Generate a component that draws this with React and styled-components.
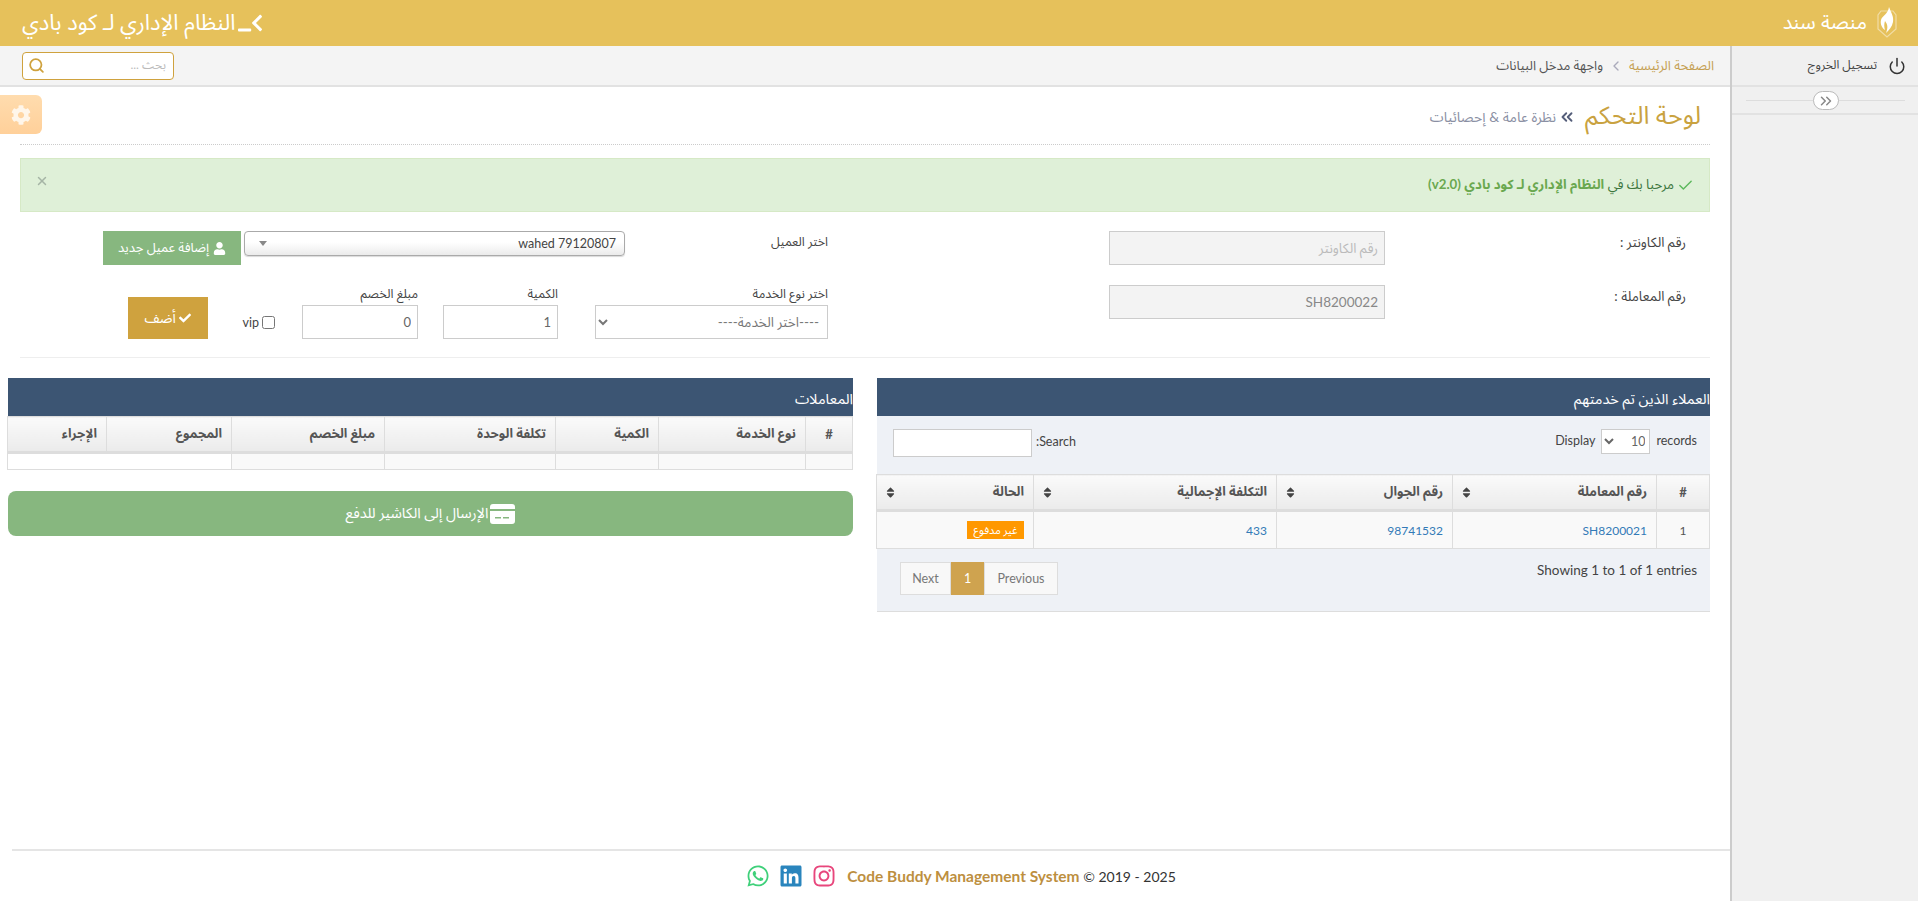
import React from "react";
import styled, { createGlobalStyle } from "styled-components";
import { Power, Check, ChevronsLeft, ChevronsRight, ChevronLeft, Search, X } from "lucide-react";
import { FaCog, FaUser, FaWhatsapp, FaLinkedin, FaInstagram, FaTerminal, FaSort, FaCheck } from "react-icons/fa";

const fontStack = `Lato, "Noto Sans Arabic", "DejaVu Sans", sans-serif`;

const GlobalStyle = createGlobalStyle`
  html, body { margin: 0; padding: 0; height: 100%; background: #fff; overflow: hidden; }
  body { font-family: ${fontStack}; font-size: 12.5px; color: #333; }
  * { box-sizing: border-box; }
`;

const Shell = styled.div`
  display: flex;
  flex-direction: column;
  height: 901px;
`;

const TopBar = styled.header`
  height: 46px;
  flex: none;
  background: #e6c15b;
  color: #fff;
  display: flex;
  align-items: center;
  justify-content: space-between;
  padding: 0 20px 0 22px;
`;

const Brand = styled.div`
  display: flex;
  align-items: center;
  gap: 9px;
  font-size: 20px;
`;

const SystemName = styled.div`
  display: flex;
  align-items: center;
  gap: 3px;
  font-size: 22px;
  svg { transform: scaleX(-1); font-size: 24px; }
`;

const Body = styled.div`
  flex: 1;
  display: flex;
  min-height: 0;
`;

const Sidebar = styled.aside`
  width: 188px;
  flex: none;
  background: #f0f0f0;
  border-left: 2px solid #ccc;
`;

const LogoutRow = styled.div`
  height: 41px;
  display: flex;
  align-items: center;
  gap: 11px;
  padding-right: 12px;
  border-bottom: 2px solid #e2e2e2;
  color: #444;
  font-size: 12px;
  svg { color: #333; }
`;

const ToggleRow = styled.div`
  height: 28px;
  display: flex;
  align-items: center;
  padding: 0 13px 0 14px;
  border-bottom: 2px solid #e2e2e2;
`;

const ToggleLine = styled.div`
  flex: 1;
  height: 0;
  border-top: 1px solid #ddd;
  display: flex;
  align-items: center;
  justify-content: center;
`;

const TogglePill = styled.span`
  width: 26px;
  height: 19px;
  border-radius: 10px;
  background: #fff;
  border: 1px solid #bbb;
  color: #888;
  display: flex;
  align-items: center;
  justify-content: center;
`;

const Main = styled.main`
  flex: 1;
  min-width: 0;
  display: flex;
  flex-direction: column;
  position: relative;
`;

const SubHeader = styled.div`
  height: 41px;
  flex: none;
  background: #f4f4f4;
  border-bottom: 2px solid #e2e2e2;
  display: flex;
  align-items: center;
  justify-content: space-between;
  padding: 0 16px 0 22px;
`;

const Crumbs = styled.div`
  display: flex;
  align-items: center;
  gap: 5px;
  font-size: 13px;
  color: #555;
  svg { color: #aab; }
`;

const CrumbLink = styled.span`
  color: #c5a052;
`;

const SearchBox = styled.div`
  width: 152px;
  height: 28px;
  background: #fff;
  border: 1px solid #cfa23e;
  border-radius: 4px;
  display: flex;
  align-items: center;
  justify-content: space-between;
  padding: 0 5px 0 5px;
  color: #cfa23e;
`;

const SearchHint = styled.span`
  color: #bbb;
  font-size: 12px;
  padding-right: 2px;
`;

const GearTab = styled.div`
  position: absolute;
  left: 0;
  top: 49px;
  width: 42px;
  height: 39px;
  border-radius: 0 6px 6px 0;
  background: linear-gradient(to bottom, #ffdcae, #ffd09a);
  color: #fff6ea;
  display: flex;
  align-items: center;
  justify-content: center;
  font-size: 20px;
`;

const Content = styled.div`
  flex: 1;
  padding: 0 20px 0 8px;
`;

const TitleRow = styled.div`
  height: 58px;
  margin-left: 12px;
  border-bottom: 1px dotted #ccc;
  display: flex;
  align-items: center;
  gap: 9px;
  padding-right: 9px;
`;

const PageTitle = styled.h1`
  margin: 0;
  font-size: 25px;
  font-weight: 400;
  color: #c9a240;
`;

const PageSub = styled.span`
  display: flex;
  align-items: center;
  gap: 2px;
  padding-top: 3px;
  font-size: 14px;
  color: #8a8fa3;
  svg { color: #555e7a; }
`;

const Alert = styled.div`
  height: 54px;
  margin: 13px 0 19px 12px;
  background: #dff0d8;
  border: 1px solid #d6e9c6;
  display: flex;
  align-items: center;
  justify-content: space-between;
  padding: 0 15px 0 14px;
  color: #3c763d;
  font-size: 13.3px;
`;

const AlertText = styled.span`
  display: flex;
  align-items: center;
  gap: 3px;
  strong { color: #6aa84f; font-weight: 700; }
`;

const AlertClose = styled.span`
  color: #a5b5a5;
  display: flex;
  margin-top: -8px;
`;

const Columns = styled.div`
  display: grid;
  grid-template-columns: 833px 845px;
  gap: 24px;
`;

const FormColumn = styled.div`
  display: flex;
  flex-direction: column;
  gap: 20px;
  padding-right: ${(p) => p.$pad}px;
`;

const Row = styled.div`
  display: flex;
  min-height: 34px;
`;

const FieldLabel = styled.label`
  width: ${(p) => p.$w}px;
  flex: none;
  line-height: 22px;
  color: #444;
  font-size: ${(p) => p.$size || 12.5}px;
`;

const ReadOnlyInput = styled.input`
  width: 276px;
  height: 34px;
  background: #f3f3f3;
  border: 1px solid #ccc;
  padding: 0 6px;
  font: inherit;
  font-size: 13.5px;
  color: #888;
  &::placeholder { color: #bbb; }
  outline: none;
`;

const ClientSelect = styled.div`
  width: 381px;
  height: 25px;
  border: 1px solid #aaa;
  border-radius: 4px;
  background: linear-gradient(to bottom, #fff 45%, #ebebeb);
  box-shadow: 0 1px 1px rgba(0, 0, 0, 0.15);
  display: flex;
  align-items: center;
  justify-content: space-between;
  padding: 0 8px 0 14px;
  color: #444;
  font-size: 12.5px;
`;

const Caret = styled.span`
  width: 0;
  height: 0;
  border-left: 4px solid transparent;
  border-right: 4px solid transparent;
  border-top: 5px solid #888;
`;

const GreenButton = styled.button`
  width: 138px;
  height: 34px;
  margin-right: 3px;
  background: #87b77f;
  border: none;
  color: #fff;
  font: inherit;
  font-size: 13px;
  display: flex;
  align-items: center;
  justify-content: center;
  gap: 4px;
  svg { font-size: 13px; }
`;

const ServiceRow = styled.div`
  display: flex;
  align-items: flex-end;
`;

const Field = styled.div`
  width: ${(p) => p.$w}px;
  margin-left: ${(p) => p.$gap}px;
  display: flex;
  flex-direction: column;
  gap: 2px;
  color: #444;
  line-height: 18px;
`;

const ServiceSelect = styled.select`
  height: 34px;
  width: 100%;
  background: #fff;
  border: 1px solid #ccc;
  font: inherit;
  font-size: 13.5px;
  color: #777;
  padding: 0 4px;
`;

const NumberInput = styled.input`
  height: 34px;
  width: 100%;
  background: #fff;
  border: 1px solid #ccc;
  padding: 0 6px;
  font: inherit;
  font-size: 13px;
  color: #666;
  outline: none;
`;

const VipLabel = styled.label`
  display: flex;
  align-items: center;
  gap: 3px;
  height: 34px;
  margin-left: 35px;
  color: #444;
  input { margin: 0; width: 13px; height: 13px; }
`;

const AddButton = styled.button`
  width: 80px;
  height: 42px;
  background: #cfa23e;
  border: none;
  color: #fff;
  font: inherit;
  font-size: 14px;
  display: flex;
  align-items: center;
  justify-content: center;
  gap: 3px;
  svg { font-size: 12px; }
`;

const Divider = styled.hr`
  margin: 18px 0 20px 12px;
  border: none;
  border-top: 1px solid #eee;
`;

const Panel = styled.section``;

const PanelHead = styled.div`
  height: 38px;
  background: #3c5573;
  color: #fff;
  display: flex;
  align-items: center;
  padding-top: 4px;
  font-size: 14.5px;
  white-space: nowrap;
`;

const PanelBody = styled.div`
  height: 196px;
  background: #eef1f6;
  border-bottom: 1px solid #ddd;
`;

const ToolRow = styled.div`
  height: 58px;
  padding: 13px 13px 0 16px;
  display: flex;
  justify-content: space-between;
  align-items: flex-start;
  font-size: 12.5px;
  color: #444;
`;

const LengthGroup = styled.div`
  display: flex;
  align-items: flex-start;
  gap: 6px;
  span { padding-top: 4px; }
`;

const LengthSelect = styled.select`
  width: 49px;
  height: 25px;
  background: #fff;
  border: 1px solid #ccc;
  font: inherit;
  color: #666;
`;

const SearchGroup = styled.label`
  display: flex;
  align-items: flex-start;
  gap: 4px;
  span { padding-top: 5px; }
`;

const TableSearch = styled.input`
  width: 139px;
  height: 28px;
  background: #fff;
  border: 1px solid #ccc;
  outline: none;
`;

const Table = styled.table`
  width: 100%;
  table-layout: fixed;
  border-collapse: collapse;
  font-size: 12px;
`;

const HeadCell = styled.th`
  width: ${(p) => p.$w}px;
  height: 36px;
  padding: 0 9px;
  background: linear-gradient(to bottom, #fafafa, #ebebeb);
  border: 1px solid #ddd;
  border-bottom: 3px solid #ddd;
  color: #555;
  font-size: 13px;
  font-weight: 700;
  text-align: ${(p) => (p.$center ? "center" : "right")};
`;

const HeadInner = styled.div`
  display: flex;
  align-items: center;
  justify-content: space-between;
  margin-left: -2px;
  svg { color: #444; font-size: 13px; }
`;

const Cell = styled.td`
  height: ${(p) => p.$h}px;
  padding: 0 9px;
  background: ${(p) => (p.$plain ? "#fff" : "#f9f9f9")};
  border: 1px solid #ddd;
  color: ${(p) => (p.$link ? "#337ab7" : "#555")};
  text-align: ${(p) => (p.$center ? "center" : "right")};
`;

const Badge = styled.span`
  display: inline-block;
  width: 57px;
  height: 18px;
  line-height: 17px;
  background: #ff9800;
  color: #fff;
  font-size: 11px;
  text-align: center;
  white-space: nowrap;
`;

const PagerRow = styled.div`
  padding: 13px 13px 0 23px;
  display: flex;
  justify-content: space-between;
  align-items: flex-start;
  font-size: 12.5px;
  color: #444;
`;

const EntriesText = styled.span`
  font-size: 13.5px;
`;

const Pager = styled.div`
  display: flex;
  height: 33px;
`;

const PageBtn = styled.span`
  width: ${(p) => p.$w}px;
  display: flex;
  align-items: center;
  justify-content: center;
  background: ${(p) => (p.$on ? "#cfa34f" : "#f8f8f8")};
  color: ${(p) => (p.$on ? "#fff" : "#777")};
  border: 1px solid ${(p) => (p.$on ? "#cfa34f" : "#ddd")};
`;

const PayButton = styled.button`
  width: 100%;
  height: 45px;
  margin-top: 21px;
  background: #87b77f;
  border: none;
  border-radius: 8px;
  color: #fff;
  font: inherit;
  font-size: 14.5px;
  display: flex;
  align-items: center;
  justify-content: center;
  gap: 2px;
`;

const Footer = styled.footer`
  height: 52px;
  flex: none;
  margin-left: 12px;
  border-top: 2px solid #e5e5e5;
  display: flex;
  align-items: center;
  justify-content: center;
  gap: 11px;
  padding-left: 180px;
  color: #333;
`;

const Copyright = styled.span`
  direction: ltr;
  font-family: Lato, sans-serif;
  font-size: 14px;
  strong { color: #bd8f3f; font-weight: 700; font-size: 15.5px; }
`;

const Socials = styled.span`
  display: flex;
  gap: 9px;
  font-size: 24px;
`;

const Social = styled.span`
  display: flex;
  color: ${(p) => p.$color};
`;

function Logo() {
  return (
    <svg width="22" height="32" viewBox="0 0 22 32" fill="none">
      <path d="M5 4 H17 L20 8 V22 L11 30 L2 22 V8 Z" stroke="#fff" strokeOpacity=".45" strokeWidth="1.2" />
      <path d="M13 0 C15 6 18 9 17 15 C16 20 13 23 10 26 C12 21 12 18 9 14 C8 17 8 20 9 23 C6 21 4 17 5 13 C6 9 12 7 13 0 Z" fill="#fff" />
    </svg>
  );
}

function CardIcon() {
  return (
    <svg width="25" height="20" viewBox="0 0 25 20" fill="#fff">
      <path d="M3 0 H22 Q25 0 25 3 V5 H0 V3 Q0 0 3 0 Z" />
      <path d="M0 7 H25 V17 Q25 20 22 20 H3 Q0 20 0 17 Z M5 13 V14.4 H11 V13 Z M13 13 V14.4 H19 V13 Z" fillRule="evenodd" />
    </svg>
  );
}

const rightHead = [
  ["رقم المعاملة", 204],
  ["رقم الجوال", 176],
  ["التكلفة الإجمالية", 243],
  ["الحالة", 157],
];

const leftHead = [
  ["#", 47],
  ["نوع الخدمة", 147],
  ["الكمية", 103],
  ["تكلفة الوحدة", 171],
  ["مبلغ الخصم", 153],
  ["المجموع", 125],
  ["الإجراء", 99],
];

export default function App() {
  return (
    <Shell dir="rtl">
      <GlobalStyle />
      <TopBar>
        <Brand>
          <Logo />
          <span>منصة سند</span>
        </Brand>
        <SystemName>
          <FaTerminal />
          <span>النظام الإداري لـ كود بادي</span>
        </SystemName>
      </TopBar>
      <Body>
        <Sidebar>
          <LogoutRow>
            <Power size={18} strokeWidth={2} />
            <span>تسجيل الخروج</span>
          </LogoutRow>
          <ToggleRow>
            <ToggleLine>
              <TogglePill>
                <ChevronsRight size={18} />
              </TogglePill>
            </ToggleLine>
          </ToggleRow>
        </Sidebar>
        <Main>
          <SubHeader>
            <Crumbs>
              <CrumbLink>الصفحة الرئيسية</CrumbLink>
              <ChevronLeft size={16} />
              <span>واجهة مدخل البيانات</span>
            </Crumbs>
            <SearchBox>
              <SearchHint>بحث ...</SearchHint>
              <Search size={17} strokeWidth={2.5} />
            </SearchBox>
          </SubHeader>
          <GearTab>
            <FaCog />
          </GearTab>
          <Content>
            <TitleRow>
              <PageTitle>لوحة التحكم</PageTitle>
              <PageSub>
                <ChevronsLeft size={18} strokeWidth={2.5} />
                نظرة عامة &amp; إحصائيات
              </PageSub>
            </TitleRow>
            <Alert>
              <AlertText>
                <Check size={17} color="#5cb85c" />
                <span>
                  مرحبا بك في <strong>النظام الإداري لـ كود بادي (v2.0)</strong>
                </span>
              </AlertText>
              <AlertClose>
                <X size={14} strokeWidth={2.5} />
              </AlertClose>
            </Alert>
            <Columns>
              <FormColumn $pad={24}>
                <Row>
                  <FieldLabel $w={301} $size={13.5}>رقم الكاونتر :</FieldLabel>
                  <ReadOnlyInput readOnly placeholder="رقم الكاونتر" />
                </Row>
                <Row>
                  <FieldLabel $w={301} $size={13.5}>رقم المعاملة :</FieldLabel>
                  <ReadOnlyInput readOnly value="SH8200022" />
                </Row>
              </FormColumn>
              <FormColumn $pad={25}>
                <Row>
                  <FieldLabel $w={203}>اختر العميل</FieldLabel>
                  <ClientSelect>
                    <span>wahed 79120807</span>
                    <Caret />
                  </ClientSelect>
                  <GreenButton>
                    <FaUser />
                    إضافة عميل جديد
                  </GreenButton>
                </Row>
                <ServiceRow>
                  <Field $w={233} $gap={37}>
                    <span>اختر نوع الخدمة</span>
                    <ServiceSelect defaultValue="">
                      <option value="">----اختر الخدمة----</option>
                    </ServiceSelect>
                  </Field>
                  <Field $w={115} $gap={25}>
                    <span>الكمية</span>
                    <NumberInput defaultValue="1" />
                  </Field>
                  <Field $w={116} $gap={27}>
                    <span>مبلغ الخصم</span>
                    <NumberInput defaultValue="0" />
                  </Field>
                  <VipLabel>
                    <input type="checkbox" />
                    vip
                  </VipLabel>
                  <AddButton>
                    <FaCheck />
                    أضف
                  </AddButton>
                </ServiceRow>
              </FormColumn>
            </Columns>
            <Divider />
            <Columns>
              <Panel>
                <PanelHead>العملاء الذين تم خدمتهم</PanelHead>
                <PanelBody>
                  <ToolRow>
                    <LengthGroup>
                      <span>records</span>
                      <LengthSelect defaultValue="10">
                        <option>10</option>
                      </LengthSelect>
                      <span>Display</span>
                    </LengthGroup>
                    <SearchGroup>
                      <span>Search:</span>
                      <TableSearch />
                    </SearchGroup>
                  </ToolRow>
                  <Table>
                    <thead>
                      <tr>
                        <HeadCell $w={53} $center>#</HeadCell>
                        {rightHead.map(([label, w]) => (
                          <HeadCell key={label} $w={w}>
                            <HeadInner>
                              <span>{label}</span>
                              <FaSort />
                            </HeadInner>
                          </HeadCell>
                        ))}
                      </tr>
                    </thead>
                    <tbody>
                      <tr>
                        <Cell $h={38} $center>1</Cell>
                        <Cell $link>SH8200021</Cell>
                        <Cell $link>98741532</Cell>
                        <Cell $link>433</Cell>
                        <Cell>
                          <Badge>غير مدفوع</Badge>
                        </Cell>
                      </tr>
                    </tbody>
                  </Table>
                  <PagerRow>
                    <EntriesText>Showing 1 to 1 of 1 entries</EntriesText>
                    <Pager>
                      <PageBtn $w={74}>Previous</PageBtn>
                      <PageBtn $w={33} $on>1</PageBtn>
                      <PageBtn $w={51}>Next</PageBtn>
                    </Pager>
                  </PagerRow>
                </PanelBody>
              </Panel>
              <Panel>
                <PanelHead>المعاملات</PanelHead>
                <Table>
                  <thead>
                    <tr>
                      {leftHead.map(([label, w], i) => (
                        <HeadCell key={label} $w={w} $center={i === 0}>
                          <span>{label}</span>
                        </HeadCell>
                      ))}
                    </tr>
                  </thead>
                  <tbody>
                    <tr>
                      <Cell $h={17} />
                      <Cell />
                      <Cell />
                      <Cell />
                      <Cell />
                      <Cell $plain colSpan={2} />
                    </tr>
                  </tbody>
                </Table>
                <PayButton>
                  <CardIcon />
                  الإرسال إلى الكاشير للدفع
                </PayButton>
              </Panel>
            </Columns>
          </Content>
          <Footer>
            <Copyright>
              <strong>Code Buddy Management System</strong> © 2019 - 2025
            </Copyright>
            <Socials>
              <Social $color="#e8467c"><FaInstagram /></Social>
              <Social $color="#2a85bd"><FaLinkedin /></Social>
              <Social $color="#3fd07a"><FaWhatsapp /></Social>
            </Socials>
          </Footer>
        </Main>
      </Body>
    </Shell>
  );
}
